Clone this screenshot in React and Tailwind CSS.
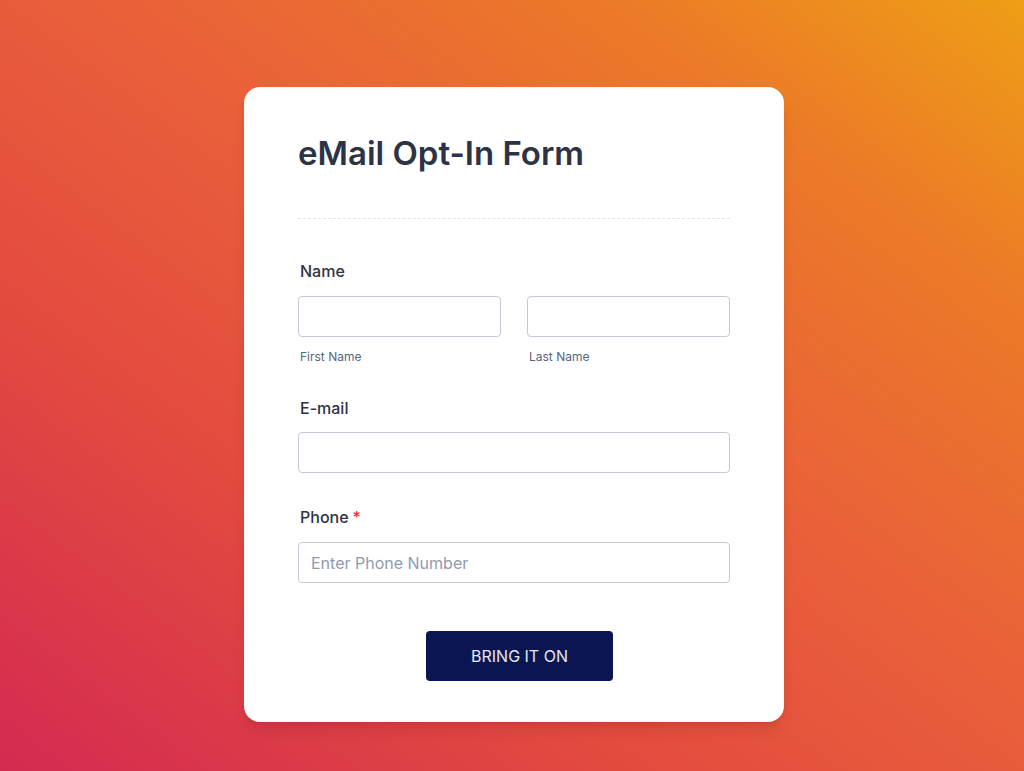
import React from 'react';

function Field({ label, required, children }) {
    return (
        <div>
            <label className="block pl-[2px] text-base leading-6 font-medium text-[#2c3345]">
                {label}
                {required && <span className="text-[#e8303a] ml-1">*</span>}
            </label>
            {children}
        </div>
    );
}

const inputClass =
    'w-full h-[41px] rounded-[4px] border border-[#c3cad8] bg-white px-3 text-base text-[#2c3345] placeholder:text-[#8f9bb0] outline-none';

export default function App() {
    return (
        <div
            className="min-h-screen w-full bg-[linear-gradient(to_top_right,#d42a52_0%,#e34a3f_30%,#e9603a_55%,#ec7a28_80%,#ee9e16_100%)] pt-[87px] pb-12"
            style={{ fontFamily: 'Inter, "Noto Sans", sans-serif' }}
        >
            <div className="ml-[244px] w-[540px] rounded-2xl bg-white px-[54px] pt-[46px] pb-[41px] shadow-lg">
                <h1 className="text-[33px] leading-10 font-semibold text-[#2c3345]">
                    eMail Opt-In Form
                </h1>
                <div className="mt-[45px] border-t border-dashed border-[#e3e5ec]"></div>

                <div className="mt-[40px]">
                    <Field label="Name">
                        <div className="mt-[13px] grid grid-cols-2 gap-[26px]">
                            <div>
                                <input className={inputClass} />
                                <p className="mt-3 text-xs leading-4 text-[#57647e] pl-[2px]">First Name</p>
                            </div>
                            <div>
                                <input className={inputClass} />
                                <p className="mt-3 text-xs leading-4 text-[#57647e] pl-[2px]">Last Name</p>
                            </div>
                        </div>
                    </Field>
                </div>

                <div className="mt-[31px]">
                    <Field label="E-mail">
                        <input className={inputClass + ' mt-3'} />
                    </Field>
                </div>

                <div className="mt-[32px]">
                    <Field label="Phone" required>
                        <input className={inputClass + ' mt-[13px]'} placeholder="Enter Phone Number" />
                    </Field>
                </div>

                <div className="mt-12 flex justify-center pl-[11px]">
                    <button className="h-[50px] w-[187px] rounded-[4px] bg-[#0a1551] text-base text-white/90">
                        BRING IT ON
                    </button>
                </div>
            </div>
        </div>
    );
}
